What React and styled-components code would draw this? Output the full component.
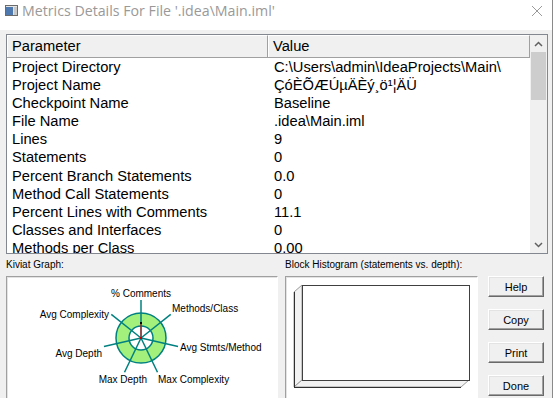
import React from 'react';
import styled, { createGlobalStyle } from 'styled-components';

const GlobalStyle = createGlobalStyle`
  html, body {
    margin: 0;
    padding: 0;
    background: #ffffff;
  }
`;

const Window = styled.div`
  width: 553px;
  height: 398px;
  overflow: hidden;
  border-right: 1px solid #8a8a8a;
  box-sizing: border-box;
  background: #f0f0f0;
  font-family: 'Liberation Sans', Arial, sans-serif;
  display: flex;
  flex-direction: column;
`;

const TitleBar = styled.div`
  height: 30px;
  flex: none;
  background: #ffffff;
  display: flex;
  align-items: center;
  padding: 0 0 0 5px;
  box-sizing: border-box;
`;

const Title = styled.span`
  margin-left: 4px;
  font-family: 'Open Sans', 'Liberation Sans', sans-serif;
  font-size: 14.2px;
  color: #999999;
  flex: 1;
  margin-top: -9px;
`;

const CloseButton = styled.span`
  width: 12px;
  height: 12px;
  margin-right: 9px;
  margin-top: -9px;
  display: flex;
`;

const Content = styled.div`
  flex: 1;
  display: flex;
  flex-direction: column;
  padding: 4px 4px 0 6px;
`;

const ListView = styled.div`
  height: 220px;
  flex: none;
  border: 1px solid #828790;
  box-sizing: border-box;
  background: #ffffff;
  display: flex;
  overflow: hidden;
`;

const ListBody = styled.div`
  flex: 1;
  overflow: hidden;
`;

const HeaderRow = styled.div`
  display: flex;
  height: 23px;
  box-sizing: border-box;
  border-bottom: 1px solid #a0a0a0;
  background: #f0f0f0;
`;

const HeaderCell = styled.div`
  width: ${(p) => p.$width}px;
  flex: ${(p) => (p.$width ? 'none' : 1)};
  box-sizing: border-box;
  border-top: 1px solid #ffffff;
  border-left: 1px solid #ffffff;
  border-right: 1px solid #a0a0a0;
  padding-left: 4px;
  font-size: 14.7px;
  line-height: 20px;
  color: #000;
`;

const Row = styled.div`
  display: flex;
  height: 18.1px;
  font-size: 14.7px;
  line-height: 18px;
  color: #000;
  white-space: nowrap;
`;

const Cell = styled.div`
  width: ${(p) => p.$width}px;
  flex: ${(p) => (p.$width ? 'none' : 1)};
  padding-left: ${(p) => (p.$width ? 5 : 6)}px;
  box-sizing: border-box;
`;

const ScrollBar = styled.div`
  width: 17px;
  flex: none;
  background: #f0f0f0;
  display: flex;
  flex-direction: column;
`;

const ScrollArrow = styled.div`
  height: 17px;
  display: flex;
  align-items: center;
  justify-content: center;
`;

const Track = styled.div`
  flex: 1;
  display: flex;
  flex-direction: column;
`;

const Thumb = styled.div`
  margin: 0 1px;
  height: 48px;
  background: #cdcdcd;
`;

const Bottom = styled.div`
  display: flex;
  align-items: flex-start;
  margin-top: 5px;
`;

const Panel = styled.div`
  width: ${(p) => p.$width}px;
  margin-right: ${(p) => p.$gap}px;
  display: flex;
  flex-direction: column;
`;

const Caption = styled.div`
  font-size: 10px;
  line-height: 12px;
  color: #000;
  height: 12px;
  margin-bottom: 5px;
  white-space: nowrap;
`;

const Frame = styled.div`
  height: 130px;
  box-sizing: border-box;
  background: #ffffff;
  border: 1px solid;
  border-color: #a0a0a0 #ffffff #ffffff #a0a0a0;
  box-shadow: inset 1px 1px 0 #e3e3e3;
  display: flex;
`;

const ButtonColumn = styled.div`
  margin-top: 17px;
  display: flex;
  flex-direction: column;
  gap: 12px;
`;

const Button = styled.button`
  width: 56px;
  height: 21px;
  box-sizing: border-box;
  padding: 0;
  background: #f0f0f0;
  border: 1px solid;
  border-color: #ffffff #696969 #696969 #ffffff;
  box-shadow: inset -1px -1px 0 #a0a0a0, inset 1px 1px 0 #e3e3e3;
  font-family: 'Liberation Sans', Arial, sans-serif;
  font-size: 11px;
  color: #000;
`;

const rows = [
  ['Project Directory', 'C:\\Users\\admin\\IdeaProjects\\Main\\'],
  ['Project Name', 'ÇóÈÕÆÚµÄÈý¸ö¹¦ÄÜ'],
  ['Checkpoint Name', 'Baseline'],
  ['File Name', '.idea\\Main.iml'],
  ['Lines', '9'],
  ['Statements', '0'],
  ['Percent Branch Statements', '0.0'],
  ['Method Call Statements', '0'],
  ['Percent Lines with Comments', '11.1'],
  ['Classes and Interfaces', '0'],
  ['Methods per Class', '0.00'],
];

const axes = [
  { label: '% Comments', x: 134, y: 20, anchor: 'middle' },
  { label: 'Methods/Class', x: 165, y: 35, anchor: 'start' },
  { label: 'Avg Stmts/Method', x: 173, y: 74, anchor: 'start' },
  { label: 'Max Complexity', x: 151, y: 106, anchor: 'start' },
  { label: 'Max Depth', x: 140, y: 106, anchor: 'end' },
  { label: 'Avg Depth', x: 95, y: 80, anchor: 'end' },
  { label: 'Avg Complexity', x: 102, y: 41, anchor: 'end' },
];

function Kiviat() {
  const cx = 134;
  const cy = 61;
  const len = 38;
  return (
    <svg width="270" height="128" viewBox="0 0 270 128">
      <circle cx={cx} cy={cy} r="25" fill="#a4f07c" stroke="#008080" strokeWidth="1.5" />
      <circle cx={cx} cy={cy} r="12" fill="#ffffff" stroke="#008080" strokeWidth="1.5" />
      {axes.map((a, i) => {
        const t = ((90 - (i * 360) / 7) * Math.PI) / 180;
        return (
          <line
            key={a.label}
            x1={cx}
            y1={cy}
            x2={cx + len * Math.cos(t)}
            y2={cy - len * Math.sin(t)}
            stroke="#008080"
            strokeWidth="1.5"
          />
        );
      })}
      <line x1={cx} y1={cy} x2={cx} y2="46" stroke="#e00000" strokeWidth="1" />
      <rect x={cx - 1} y="45" width="2" height="2" fill="#000" />
      <rect x={cx - 1} y={cy - 1} width="2" height="2" fill="#c00000" />
      {axes.map((a) => (
        <text
          key={a.label}
          x={a.x}
          y={a.y}
          textAnchor={a.anchor}
          fontFamily="'Liberation Sans', Arial, sans-serif"
          fontSize="10"
          fill="#000"
        >
          {a.label}
        </text>
      ))}
    </svg>
  );
}

function Histogram() {
  return (
    <svg width="190" height="128" viewBox="0 0 190 128">
      <polygon points="16,8 8,15 8,110 16,103" fill="#f2f2f2" stroke="#9a9a9a" strokeWidth="1" />
      <polygon points="8,110 16,103 183,103 175,110" fill="#f2f2f2" stroke="#9a9a9a" strokeWidth="1" />
      <rect x="16.5" y="8.5" width="167" height="95" fill="#ffffff" stroke="#404040" strokeWidth="1" />
      <line x1="8.5" y1="15" x2="8.5" y2="110" stroke="#303030" strokeWidth="1" />
      <line x1="8" y1="110.5" x2="175" y2="110.5" stroke="#303030" strokeWidth="1" />
    </svg>
  );
}

export default function App() {
  return (
    <>
      <GlobalStyle />
      <Window>
        <TitleBar>
          <svg width="13" height="11" viewBox="0 0 13 11" style={{ marginTop: -9 }}>
            <rect x="0.5" y="0.5" width="12" height="10" fill="#e4e4e4" stroke="#6b6b6b" />
            <rect x="1" y="2" width="7" height="8" fill="#4d78b0" />
            <rect x="9" y="2" width="3" height="8" fill="#c8c8c8" />
          </svg>
          <Title>Metrics Details For File '.idea\Main.iml'</Title>
          <CloseButton>
            <svg width="12" height="12" viewBox="0 0 12 12">
              <path d="M1 1 L11 11 M11 1 L1 11" stroke="#9a9a9a" strokeWidth="1" />
            </svg>
          </CloseButton>
        </TitleBar>
        <Content>
          <ListView>
            <ListBody>
              <HeaderRow>
                <HeaderCell $width={261}>Parameter</HeaderCell>
                <HeaderCell>Value</HeaderCell>
              </HeaderRow>
              {rows.map(([name, value]) => (
                <Row key={name}>
                  <Cell $width={261}>{name}</Cell>
                  <Cell>{value}</Cell>
                </Row>
              ))}
            </ListBody>
            <ScrollBar>
              <ScrollArrow>
                <svg width="9" height="6" viewBox="0 0 9 6">
                  <path d="M1 5 L4.5 1.5 L8 5" fill="none" stroke="#606060" strokeWidth="1.5" />
                </svg>
              </ScrollArrow>
              <Track>
                <Thumb />
              </Track>
              <ScrollArrow>
                <svg width="9" height="6" viewBox="0 0 9 6">
                  <path d="M1 1 L4.5 4.5 L8 1" fill="none" stroke="#606060" strokeWidth="1.5" />
                </svg>
              </ScrollArrow>
            </ScrollBar>
          </ListView>
          <Bottom>
            <Panel $width={272} $gap={7}>
              <Caption>Kiviat Graph:</Caption>
              <Frame>
                <Kiviat />
              </Frame>
            </Panel>
            <Panel $width={193} $gap={10}>
              <Caption>Block Histogram (statements vs. depth):</Caption>
              <Frame>
                <Histogram />
              </Frame>
            </Panel>
            <ButtonColumn>
              <Button>Help</Button>
              <Button>Copy</Button>
              <Button>Print</Button>
              <Button>Done</Button>
            </ButtonColumn>
          </Bottom>
        </Content>
      </Window>
    </>
  );
}
